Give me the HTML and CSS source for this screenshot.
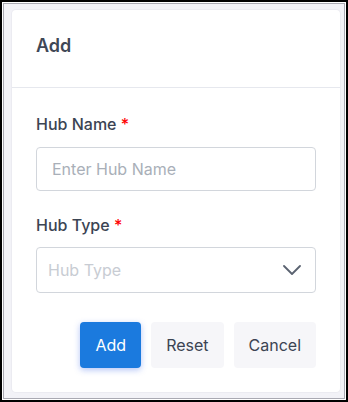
FILE: index.html
```html
<!DOCTYPE html>
<html lang="en">
<head>
<meta charset="utf-8">
<title>Add Hub</title>
<link rel="stylesheet" href="styles.css">
</head>
<body>
<div class="frame">
  <div class="card">
    <div class="card-header">
      <h2 class="title">Add</h2>
    </div>
    <form class="card-body">
      <div class="field field-name">
        <label class="label" for="hubName">Hub Name <span class="req">*</span></label>
        <input class="input" id="hubName" type="text" placeholder="Enter Hub Name">
      </div>
      <div class="field field-type">
        <label class="label">Hub Type <span class="req">*</span></label>
        <div class="select">
          <span class="select-placeholder">Hub Type</span>
          <svg class="chevron" width="18" height="10" viewBox="0 0 18 10" aria-hidden="true">
            <path d="M1 1 L9 9 L17 1" fill="none" stroke="#5a6270" stroke-width="1.8" stroke-linecap="round" stroke-linejoin="round"/>
          </svg>
        </div>
      </div>
      <div class="actions">
        <button type="button" class="btn btn-primary">Add</button>
        <button type="button" class="btn btn-light">Reset</button>
        <button type="button" class="btn btn-light">Cancel</button>
      </div>
    </form>
  </div>
</div>
</body>
</html>
```

FILE: styles.css
```css
* { box-sizing: border-box; }
html, body { margin: 0; padding: 0; }
body {
  width: 348px;
  height: 402px;
  font-family: "Inter", "Noto Sans", sans-serif;
  color: #3d4756;
}
.frame {
  width: 348px;
  height: 402px;
  border: 2px solid #000;
  box-shadow: inset 0 0 0 1px #ffffff, inset 0 0 0 2px #a9a9b2;
  background: #f2f2f7;
  padding: 8px 6px 8px 10px;
}
.card {
  background: #fff;
  border-radius: 4px;
  height: 382px;
  box-shadow: 0 0 0 1px #ebebf1;
}
.card-header {
  height: 78px;
  border-bottom: 1px solid #e6e8ee;
  padding: 24px 24px 0 24px;
}
.title {
  margin: 0;
  font-size: 18px;
  line-height: 24px;
  font-weight: 600;
  color: #3f4856;
}
.card-body {
  padding: 25px 24px 0 24px;
  display: flex;
  flex-direction: column;
}
.label {
  display: block;
  font-size: 16px;
  font-weight: 500;
  line-height: 22px;
  color: #3b4453;
}
.req { color: #ff0000; font-weight: 500; }
.input {
  display: block;
  width: 280px;
  height: 44px;
  margin-top: 12px;
  border: 1px solid #d2d6dc;
  border-radius: 4px;
  padding: 0 15px;
  font-family: inherit;
  font-size: 16px;
  color: #3b4453;
  outline: none;
}
.input::placeholder { color: #a9afb8; }
.field-type { margin-top: 23px; }
.select {
  margin-top: 11px;
  width: 280px;
  height: 46px;
  border: 1px solid #d2d6dc;
  border-radius: 4px;
  display: flex;
  align-items: center;
  justify-content: space-between;
  padding: 0 14px 0 11px;
}
.select-placeholder {
  font-size: 16px;
  color: #c8ccd3;
}
.chevron { display: block; }
.actions {
  margin-top: 29px;
  display: flex;
  justify-content: flex-end;
  gap: 10px;
}
.btn {
  height: 46px;
  padding: 0 15px;
  border: none;
  border-radius: 4px;
  font-family: inherit;
  font-size: 16px;
  cursor: pointer;
}
.btn-primary {
  background: #1b7ade;
  color: #fff;
  box-shadow: 0 2px 6px rgba(40, 90, 230, 0.35);
}
.btn-light {
  background: #f6f6f9;
  color: #3b4453;
}
```
